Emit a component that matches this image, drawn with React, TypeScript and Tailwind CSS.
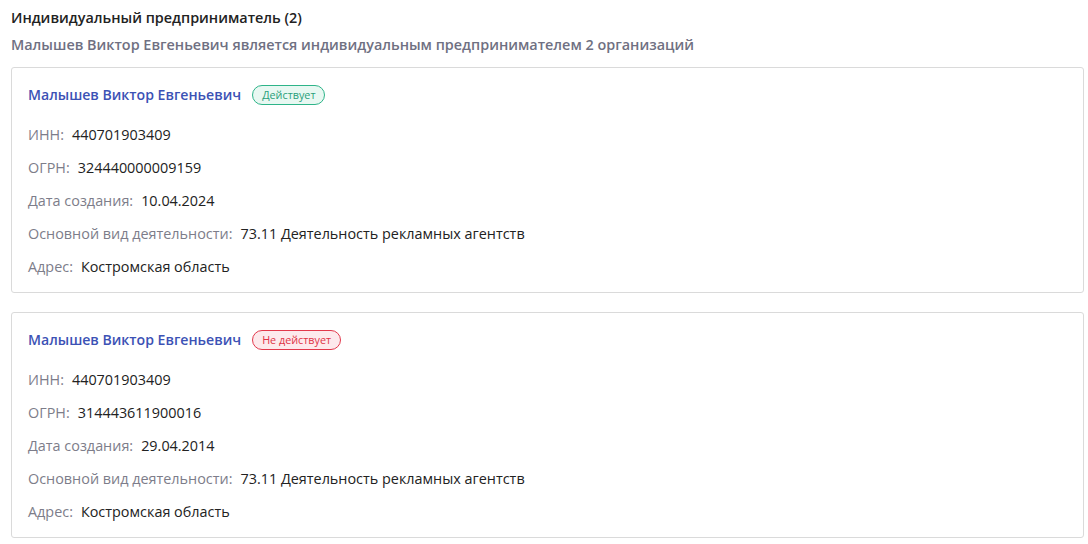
const orgs = [
  {
    active: true,
    inn: "440701903409",
    ogrn: "324440000009159",
    date: "10.04.2024",
  },
  {
    active: false,
    inn: "440701903409",
    ogrn: "314443611900016",
    date: "29.04.2014",
  },
];

function Row({ label, value }: { label: string; value: string }) {
  return (
    <div className="flex items-center gap-[8px] h-[21px] text-[14.4px] leading-[21px]">
      <span className="text-[#7d7d8a]">{label}</span>
      <span className="text-[#222222]">{value}</span>
    </div>
  );
}

export default function App() {
  return (
    <div className="w-[1088px] h-[544px] bg-white pl-[11px] pr-[4px] pt-[8px] font-['Open_Sans',sans-serif] overflow-hidden">
      <div className="text-[14.4px] leading-[20px] font-semibold text-[#222222]">
        Индивидуальный предприниматель (2)
      </div>
      <div className="mt-[7px] text-[14.4px] leading-[20px] font-semibold text-[#6f7082]">
        Малышев Виктор Евгеньевич является индивидуальным предпринимателем 2 организаций
      </div>
      <div className="mt-[12px] flex flex-col gap-[19px]">
        {orgs.map((o, i) => (
          <div key={i} className="h-[226px] border border-[#dadada] rounded-[3px] px-4 pt-[17px] pb-[15px]">
            <div className="flex items-center gap-[11px] h-[20px]">
              <span className="text-[14.1px] font-semibold text-[#3c52b5]">Малышев Виктор Евгеньевич</span>
              {o.active ? (
                <span className="h-[20px] px-[9px] flex items-center rounded-full border border-[#2eb489] bg-[#e8f8f2] text-[#2a9f7b] text-[10.8px]">
                  Действует
                </span>
              ) : (
                <span className="h-[20px] px-[9px] flex items-center rounded-full border border-[#e2394c] bg-[#fde9ec] text-[#e03346] text-[10.8px]">
                  Не действует
                </span>
              )}
            </div>
            <div className="mt-[19px] flex flex-col gap-[12px]">
              <Row label="ИНН:" value={o.inn} />
              <Row label="ОГРН:" value={o.ogrn} />
              <Row label="Дата создания:" value={o.date} />
              <Row label="Основной вид деятельности:" value="73.11 Деятельность рекламных агентств" />
              <Row label="Адрес:" value="Костромская область" />
            </div>
          </div>
        ))}
      </div>
    </div>
  );
}
